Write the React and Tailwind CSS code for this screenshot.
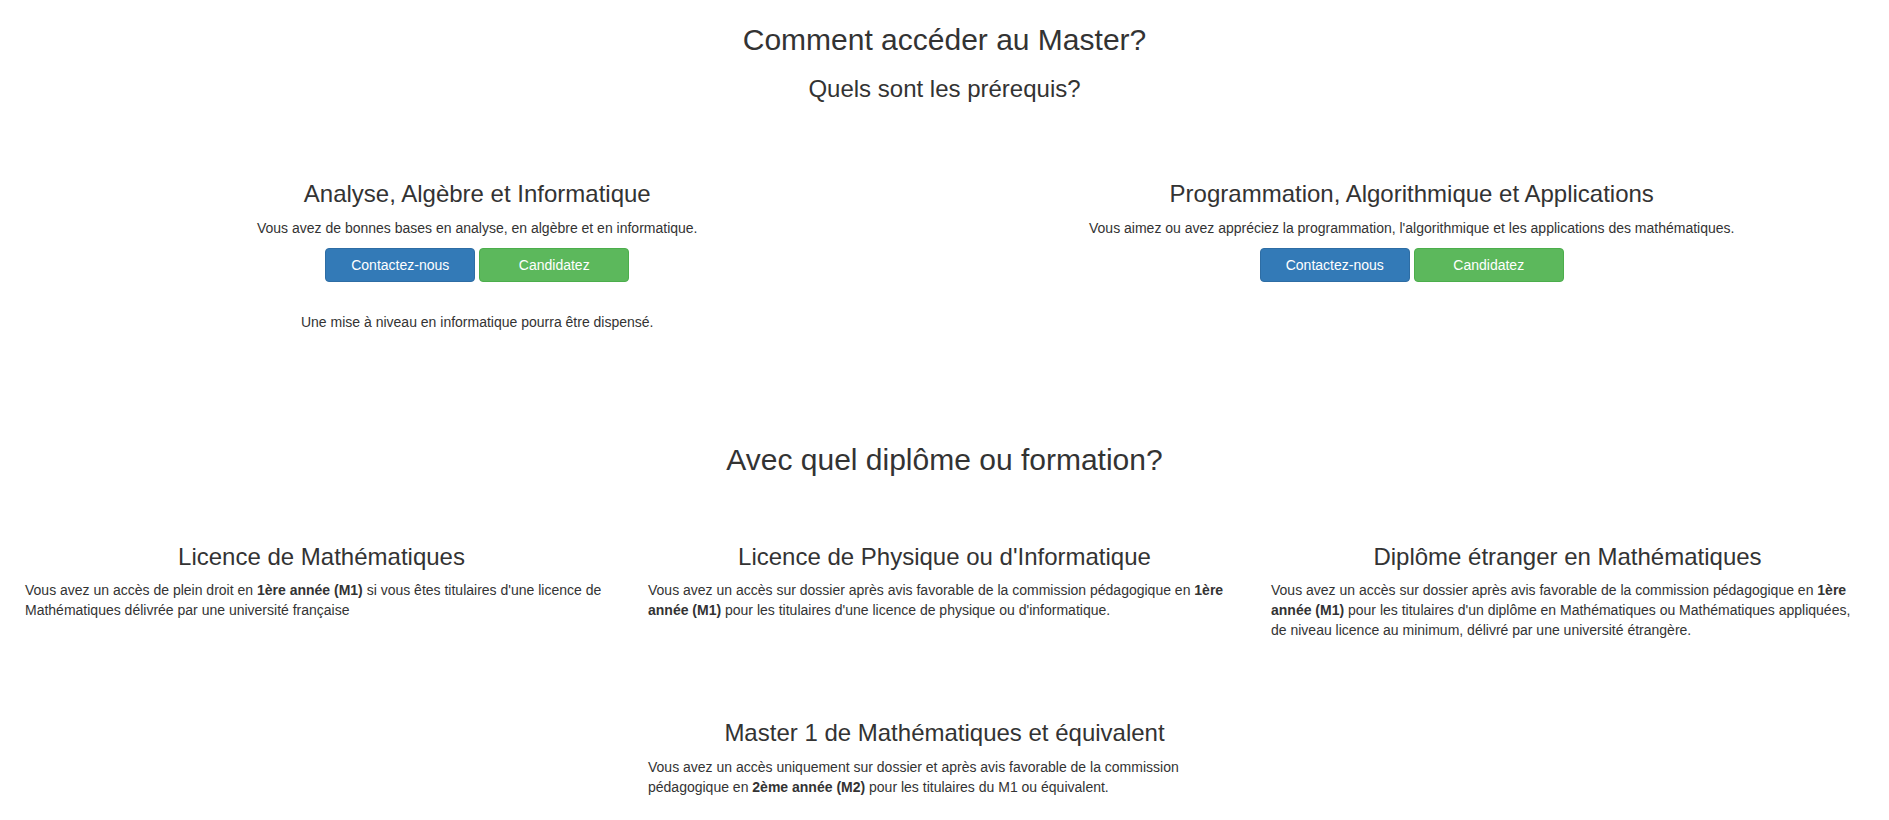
export default function App() {
  const font = { fontFamily: '"Liberation Sans", Arial, Helvetica, sans-serif' };
  const Buttons = () => (
    <div className="mt-[10px] flex justify-center gap-[4px]">
      <button className="w-[150px] h-[34px] rounded-[4px] border border-[#2e6da4] bg-[#337ab7] text-white text-[14px] leading-[20px]">
        Contactez-nous
      </button>
      <button className="w-[150px] h-[34px] rounded-[4px] border border-[#4cae4c] bg-[#5cb85c] text-white text-[14px] leading-[20px]">
        Candidatez
      </button>
    </div>
  );
  return (
    <div className="min-h-[820px] bg-white text-[#333333] text-[14px] leading-[20px] px-[10px]" style={font}>
      <div className="pt-[23px] text-center">
        <h2 className="text-[30px] leading-[33px]">Comment accéder au Master?</h2>
        <h3 className="mt-[20px] text-[24px] leading-[26.4px]">Quels sont les prérequis?</h3>
      </div>

      <div className="mt-[79px] grid grid-cols-2">
        <div className="px-[15px] text-center">
          <h3 className="text-[24px] leading-[26.4px]">Analyse, Algèbre et Informatique</h3>
          <p className="mt-[10px]">Vous avez de bonnes bases en analyse, en algèbre et en informatique.</p>
          <Buttons />
          <p className="mt-[30px]">Une mise à niveau en informatique pourra être dispensé.</p>
        </div>
        <div className="px-[15px] text-center">
          <h3 className="text-[24px] leading-[26.4px]">Programmation, Algorithmique et Applications</h3>
          <p className="mt-[10px]">Vous aimez ou avez appréciez la programmation, l'algorithmique et les applications des mathématiques.</p>
          <Buttons />
        </div>
      </div>

      <h2 className="mt-[111px] text-center text-[30px] leading-[33px]">Avec quel diplôme ou formation?</h2>

      <div className="mt-[68px] grid grid-cols-3">
        <div className="px-[15px]">
          <h3 className="text-center text-[24px] leading-[26.4px]">Licence de Mathématiques</h3>
          <p className="mt-[10px]">
            Vous avez un accès de plein droit en <b className="font-bold">1ère année (M1)</b> si vous êtes titulaires d'une licence de Mathématiques délivrée par une université française
          </p>
        </div>
        <div className="px-[15px]">
          <h3 className="text-center text-[24px] leading-[26.4px]">Licence de Physique ou d'Informatique</h3>
          <p className="mt-[10px]">
            Vous avez un accès sur dossier après avis favorable de la commission pédagogique en <b className="font-bold">1ère année (M1)</b> pour les titulaires d'une licence de physique ou d'informatique.
          </p>
        </div>
        <div className="px-[15px]">
          <h3 className="text-center text-[24px] leading-[26.4px]">Diplôme étranger en Mathématiques</h3>
          <p className="mt-[10px]">
            Vous avez un accès sur dossier après avis favorable de la commission pédagogique en <b className="font-bold">1ère année (M1)</b> pour les titulaires d'un diplôme en Mathématiques ou Mathématiques appliquées, de niveau licence au minimum, délivré par une université étrangère.
          </p>
        </div>
      </div>

      <div className="mt-[80px] grid grid-cols-3">
        <div className="col-start-2 px-[15px]">
          <h3 className="text-center text-[24px] leading-[26.4px]">Master 1 de Mathématiques et équivalent</h3>
          <p className="mt-[10px]">
            Vous avez un accès uniquement sur dossier et après avis favorable de la commission pédagogique en <b className="font-bold">2ème année (M2)</b> pour les titulaires du M1 ou équivalent.
          </p>
        </div>
      </div>
    </div>
  );
}
